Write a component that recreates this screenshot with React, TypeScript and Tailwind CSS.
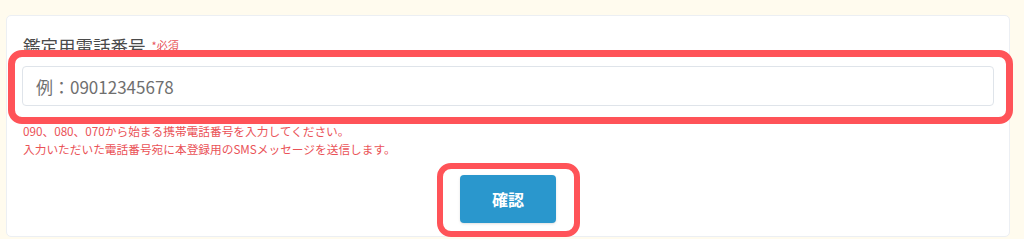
import React from "react";

const jp = { fontFamily: '"Noto Sans CJK JP", "Noto Sans", sans-serif' };

export default function App() {
    return (
        <div className="relative h-[239px] w-[1024px] overflow-hidden bg-[#fffbee] pt-[15px] pl-[6px]" style={jp}>
            <div className="w-[1004px] rounded-[5px] border border-[#eceff3] bg-white px-[15px] pt-[18px] pb-[13px]">
                <div className="mb-[8px] flex h-[24px] items-center gap-[6px] pl-[1px]">
                    <span className="text-[17.5px] leading-[24px] text-[#4a4a4a]">鑑定用電話番号</span>
                    <span className="-mt-[2px] text-[11px] leading-[14px] text-[#e8555a]">*必須</span>
                </div>
                <input
                    className="h-[40px] w-full rounded-[4px] border border-[#dfe4ea] px-[13px] text-[17px] text-[#555] outline-none placeholder:text-[#6f6f6f]"
                    placeholder="例：09012345678"
                    style={jp}
                />
                <div className="mt-[16px] pl-[1px] text-[11.7px] leading-[18px] text-[#ea5257]">
                    <p>090、080、070から始まる携帯電話番号を入力してください。</p>
                    <p>入力いただいた電話番号宛に本登録用のSMSメッセージを送信します。</p>
                </div>
                <div className="mt-[17px] flex justify-center">
                    <button className="h-[48px] w-[96px] rounded-[4px] bg-[#2a97cd] text-[16px] font-bold text-white shadow-sm">
                        確認
                    </button>
                </div>
            </div>

            {/* annotation outlines */}
            <div className="pointer-events-none absolute left-[8px] top-[50px] h-[74px] w-[1005px] rounded-[14px] border-[7px] border-[#ff5358]" />
            <div className="pointer-events-none absolute left-[437px] top-[163px] h-[74px] w-[143px] rounded-[14px] border-[6px] border-[#ff5358]" />
        </div>
    );
}
